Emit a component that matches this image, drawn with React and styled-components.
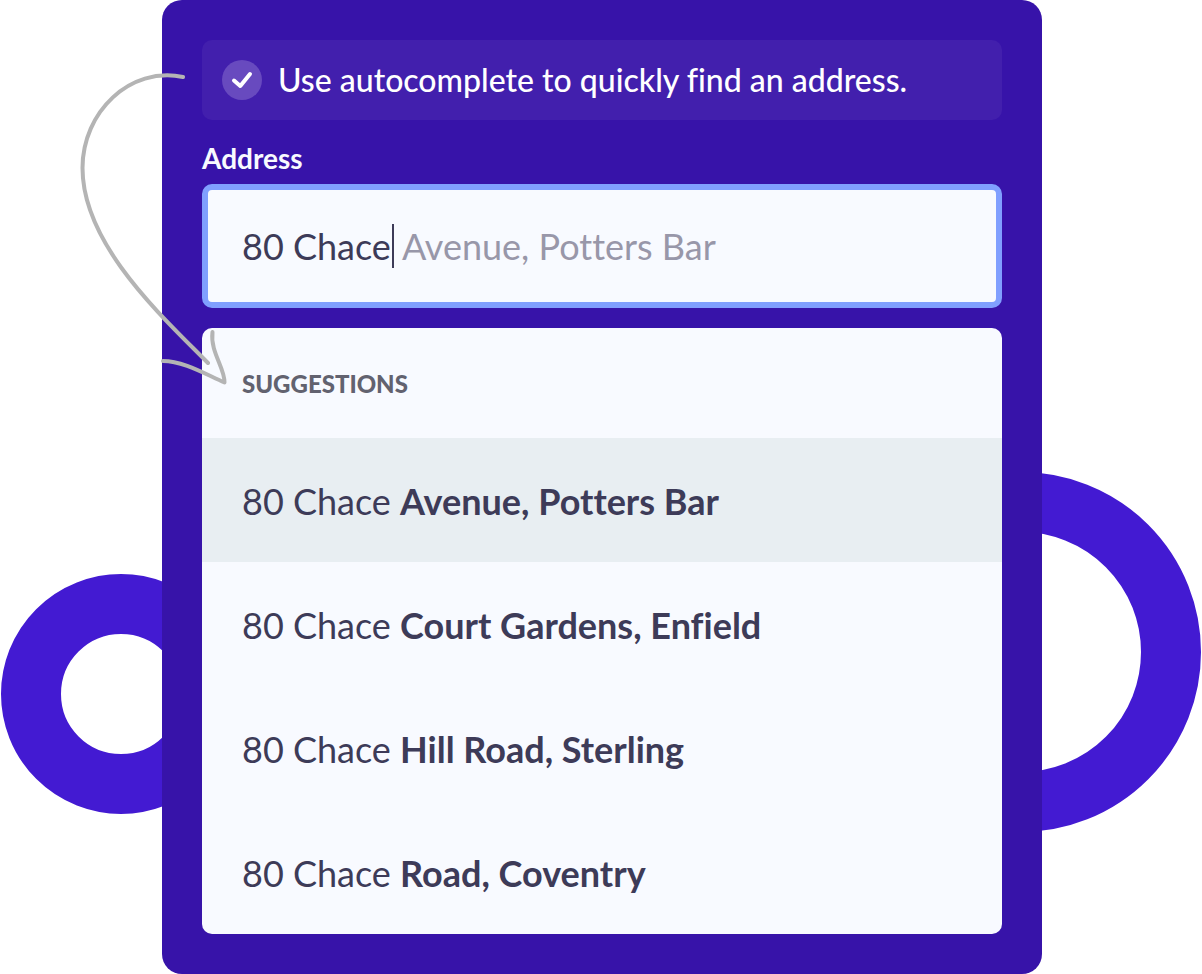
import React, { useState } from "react";
import styled, { createGlobalStyle } from "styled-components";

const GlobalStyle = createGlobalStyle`
  *, *::before, *::after { box-sizing: border-box; }
  body {
    margin: 0;
    background: #ffffff;
    color: #3d3b58;
    font-family: Lato, "Liberation Sans", sans-serif;
    font-variant-ligatures: none;
  }
`;

const Stage = styled.main`
  position: relative;
  isolation: isolate;
  overflow: hidden;
  padding: 0 160px 0 162px;
`;

const Card = styled.section`
  position: relative;
  display: flex;
  flex-direction: column;
  padding: 40px;
  border-radius: 20px;
  background: #3713a9;
`;

const Ring = styled.span`
  position: absolute;
  z-index: -1;
  top: ${(p) => p.$top}px;
  ${(p) => p.$side}: 1px;
  width: ${(p) => p.$size}px;
  height: ${(p) => p.$size}px;
  border: 60px solid #431ad2;
  border-radius: 50%;
`;

const Arrow = styled.svg`
  position: absolute;
  top: 64px;
  left: 72px;
  width: 164px;
  height: 328px;
  fill: none;
  stroke: #b4b4b4;
  stroke-width: 4;
  stroke-linecap: round;
  stroke-linejoin: round;
  pointer-events: none;
`;

const Tip = styled.p`
  display: flex;
  align-items: center;
  gap: 16px;
  margin: 0;
  padding: 20px;
  border-radius: 10px;
  background: #421fad;
  color: #ffffff;
  font-size: 32px;
  font-weight: 500;
  line-height: 40px;
`;

const TipIcon = styled.svg`
  flex: none;
  width: 40px;
  height: 40px;
`;

const Label = styled.label`
  padding: 22px 0 10px;
  color: #f8faff;
  font-size: 28px;
  font-weight: 700;
  line-height: 32px;
`;

const Field = styled.div`
  display: flex;
  align-items: center;
  height: 124px;
  padding: 0 34px;
  border: 6px solid #809fff;
  border-radius: 10px;
  background: #f8faff;
  font-size: 36px;
  line-height: 44px;
  white-space: pre;
`;

const Input = styled.input`
  field-sizing: content;
  min-width: 2px;
  padding: 0;
  border: 0;
  outline: 0;
  background: transparent;
  color: #3d3b58;
  caret-color: transparent;
  font: inherit;
`;

const Caret = styled.span`
  width: 2px;
  height: 44px;
  margin-left: 1px;
  background: #3d3b58;
`;

const Ghost = styled.span`
  color: #9897a9;
`;

const Panel = styled.div`
  overflow: hidden;
  margin-top: 20px;
  border-radius: 10px;
  background: #f8faff;
`;

const PanelTitle = styled.h2`
  margin: 0;
  padding: 41px 40px 39px;
  color: #62626f;
  font-size: 24px;
  font-weight: 900;
  line-height: 30px;
`;

const Options = styled.ul`
  margin: 0;
  padding: 0;
  list-style: none;
`;

const Option = styled.button`
  display: block;
  width: 100%;
  padding: 41px 40px 39px;
  border: 0;
  background: ${(p) => (p.$active ? "#e8eef2" : "transparent")};
  color: #3d3b58;
  font: inherit;
  font-size: 36px;
  line-height: 44px;
  text-align: left;
  cursor: pointer;
`;

const suggestions = [
  "Avenue, Potters Bar",
  "Court Gardens, Enfield",
  "Hill Road, Sterling",
  "Road, Coventry",
];

export default function App() {
  const [query, setQuery] = useState("80 Chace");
  const [active, setActive] = useState(0);

  return (
    <>
      <GlobalStyle />
      <Stage>
        <Ring $side="left" $top={574} $size={240} />
        <Ring $side="right" $top={472} $size={360} />
        <Card>
          <Tip>
            <TipIcon viewBox="0 0 40 40" aria-hidden="true">
              <circle cx="20" cy="20" r="20" fill="#684abf" />
              <path
                d="M12 20.5 L18.3 26 L28 14"
                fill="none"
                stroke="#ffffff"
                strokeWidth="4"
                strokeLinecap="round"
                strokeLinejoin="round"
              />
            </TipIcon>
            Use autocomplete to quickly find an address.
          </Tip>
          <Label htmlFor="address">Address</Label>
          <Field>
            <Input
              id="address"
              type="text"
              autoComplete="off"
              value={query}
              onChange={(e) => setQuery(e.target.value)}
            />
            <Caret />
            <Ghost> {suggestions[active]}</Ghost>
          </Field>
          <Panel>
            <PanelTitle>SUGGESTIONS</PanelTitle>
            <Options>
              {suggestions.map((rest, i) => (
                <li key={rest}>
                  <Option type="button" $active={i === active} onClick={() => setActive(i)}>
                    80 Chace <b>{rest}</b>
                  </Option>
                </li>
              ))}
            </Options>
          </Panel>
        </Card>
        <Arrow viewBox="72 64 164 328" aria-hidden="true">
          <path d="M183 77 C130 66 82.5 112 82.5 168 C82.5 246 166 320 208 363" />
          <path d="M212.5 332 C210 352 225 368 224.5 382.5 C205 374 183 361 163 361" />
        </Arrow>
      </Stage>
    </>
  );
}
